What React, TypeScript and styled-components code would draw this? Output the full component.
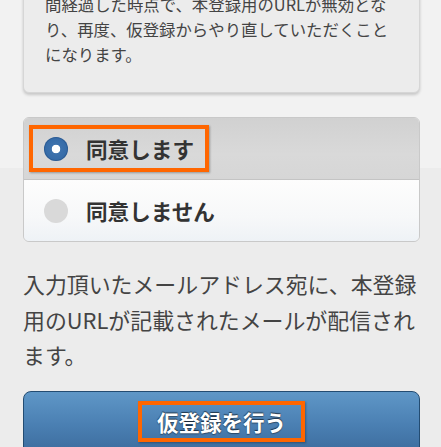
import React from "react";
import styled, { createGlobalStyle } from "styled-components";

const Global = createGlobalStyle`
  html, body {
    margin: 0;
    padding: 0;
  }
  body {
    background: linear-gradient(#f2f2f2 0, #f2f2f2 168px, #ececec 168px, #ececec 100%);
    font-family: "Noto Sans CJK JP", "Noto Sans", sans-serif;
    overflow: hidden;
    height: 447px;
  }
`;

const Page = styled.div`
  width: 441px;
  padding: 0 21px 0 23px;
  box-sizing: border-box;
  display: flex;
  flex-direction: column;
`;

const NoticeCard = styled.div`
  margin-top: -29px;
  background: #ececec;
  border: 1px solid #d6d6d6;
  border-radius: 6px;
  box-shadow: 0 2px 3px rgba(0, 0, 0, 0.18);
  padding: 20px 20px 25px 21px;
  font-size: 16.4px;
  line-height: 25px;
  color: #444;
`;

const RadioGroup = styled.div`
  margin-top: 24px;
  border: 1px solid #c9c9c9;
  border-radius: 6px;
  overflow: hidden;
  display: flex;
  flex-direction: column;
`;

const Row = styled.label<{ $selected?: boolean }>`
  height: 61px;
  display: flex;
  align-items: center;
  padding-left: ${(p) => (p.$selected ? "5px" : "20px")};
  background: ${(p) =>
    p.$selected
      ? "linear-gradient(#d1d1d1, #d9d9d9 60%, #d6d6d6)"
      : "linear-gradient(#fdfdfd, #f7f8f9 60%, #eef2f6)"};
  & + & {
    border-top: 1px solid #c4c4c4;
  }
`;

const Highlight = styled.span`
  display: inline-flex;
  align-items: center;
  border: 4px solid #ff6600;
  padding: 0 11px;
  height: 39px;
  box-shadow: 1px 1px 2px rgba(0, 0, 0, 0.3);
`;

const Radio = styled.span<{ $checked?: boolean }>`
  width: 24px;
  height: 24px;
  border-radius: 50%;
  flex: none;
  box-sizing: border-box;
  background: ${(p) =>
    p.$checked ? "radial-gradient(circle, #fff 0 4px, #3d72ad 4.6px, #2f65a3 100%)" : "#d9d9d9"};
  box-shadow: ${(p) => (p.$checked ? "inset 0 0 0 1px rgba(30,70,120,0.4)" : "none")};
`;

const Label = styled.span`
  margin-left: 18px;
  font-size: 21.6px;
  font-weight: 700;
  color: #333;
  line-height: 1;
`;

const Info = styled.p`
  margin: 24px 0 0;
  font-size: 21.9px;
  line-height: 35.5px;
  color: #444;
`;

const Submit = styled.button`
  margin-top: 18px;
  height: 66px;
  width: 100%;
  border: 1.5px solid #234c72;
  border-radius: 8px;
  background: linear-gradient(#5f97c7, #4b80b3 50%, #3b6a9b);
  display: flex;
  justify-content: center;
  align-items: flex-start;
  padding-top: 9px;
  font-family: inherit;
  cursor: pointer;
`;

const SubmitText = styled.span`
  display: inline-block;
  border: 4px solid #ff6600;
  padding: 0 15px;
  height: 41px;
  box-sizing: border-box;
  line-height: 33px;
  font-size: 21.5px;
  font-weight: 700;
  color: #fff;
  text-shadow: 0 -1px 1px rgba(0, 0, 0, 0.6), 0 1px 1px rgba(0, 0, 0, 0.4);
  box-shadow: 1px 1px 2px rgba(0, 0, 0, 0.3);
`;

export default function App() {
  return (
    <>
      <Global />
      <Page>
        <NoticeCard>
          間経過した時点で、本登録用のURLが無効とな
          <br />
          り、再度、仮登録からやり直していただくこと
          <br />
          になります。
        </NoticeCard>
        <RadioGroup>
          <Row $selected>
            <Highlight>
              <Radio $checked />
              <Label>同意します</Label>
            </Highlight>
          </Row>
          <Row>
            <Radio />
            <Label>同意しません</Label>
          </Row>
        </RadioGroup>
        <Info>
          入力頂いたメールアドレス宛に、本登録用のURLが記載されたメールが配信されます。
        </Info>
        <Submit>
          <SubmitText>仮登録を行う</SubmitText>
        </Submit>
      </Page>
    </>
  );
}
